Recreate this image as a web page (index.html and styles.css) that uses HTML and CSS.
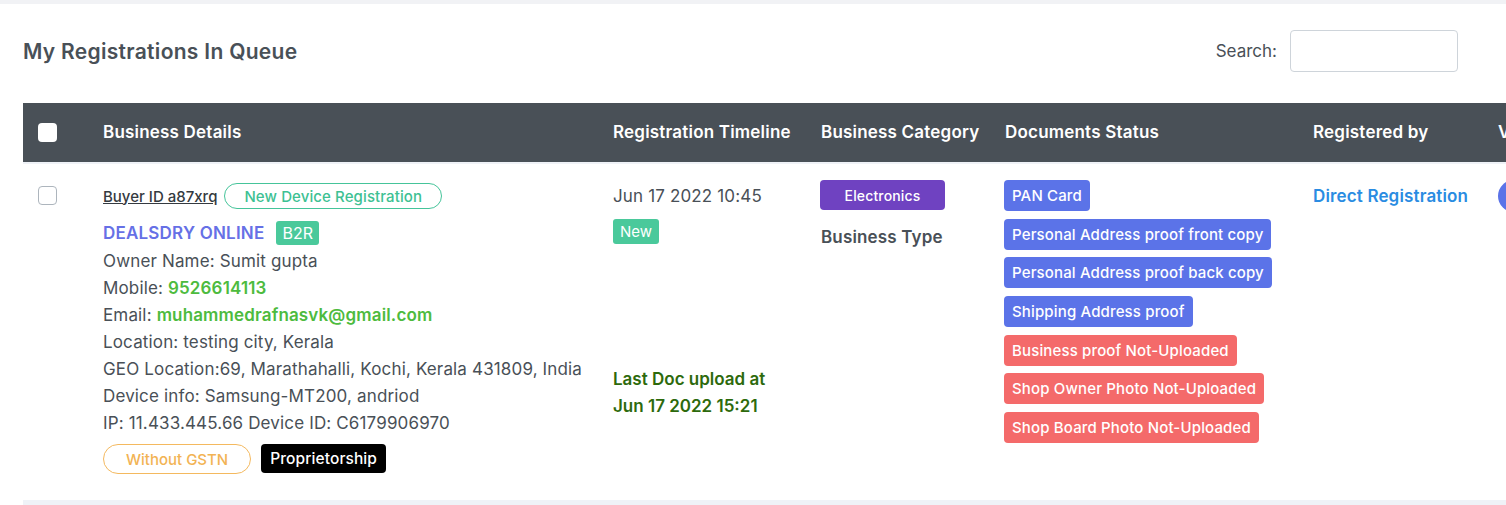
FILE: index.html
```html
<!DOCTYPE html>
<html lang="en">
<head>
<meta charset="utf-8">
<title>My Registrations In Queue</title>
<link rel="stylesheet" href="styles.css">
</head>
<body>
<div class="card">
  <div class="card-head">
    <h4 class="title">My Registrations In Queue</h4>
    <label class="search">Search: <input type="text" class="search-input"></label>
  </div>
  <div class="table-wrap">
    <table class="reg-table">
      <colgroup>
        <col class="c-check"><col class="c-details"><col class="c-time"><col class="c-cat"><col class="c-docs"><col class="c-reg"><col class="c-view">
      </colgroup>
      <thead>
        <tr>
          <th><span class="check check-head"></span></th>
          <th>Business Details</th>
          <th>Registration Timeline</th>
          <th>Business Category</th>
          <th>Documents Status</th>
          <th>Registered by</th>
          <th>View</th>
        </tr>
      </thead>
      <tbody>
        <tr>
          <td><span class="check check-row"></span></td>
          <td>
            <div class="id-line">
              <a class="buyer-id">Buyer ID a87xrq</a>
              <span class="pill pill-green">New Device Registration</span>
            </div>
            <div class="name-line">
              <span class="biz-name">DEALSDRY ONLINE</span>
              <span class="tag tag-green">B2R</span>
            </div>
            <div class="info">Owner Name: Sumit gupta</div>
            <div class="info">Mobile: <strong class="hl">9526614113</strong></div>
            <div class="info">Email: <strong class="hl">muhammedrafnasvk@gmail.com</strong></div>
            <div class="info">Location: testing city, Kerala</div>
            <div class="info">GEO Location:69, Marathahalli, Kochi, Kerala 431809, India</div>
            <div class="info">Device info: Samsung-MT200, andriod</div>
            <div class="info">IP: 11.433.445.66 Device ID: C6179906970</div>
            <div class="badge-line">
              <span class="pill pill-orange">Without GSTN</span>
              <span class="tag tag-black">Proprietorship</span>
            </div>
          </td>
          <td>
            <div class="date">Jun 17 2022 10:45</div>
            <span class="tag tag-green tag-new">New</span>
            <div class="last-doc">Last Doc upload at<br>Jun 17 2022 15:21</div>
          </td>
          <td>
            <span class="cat-badge">Electronics</span>
            <div class="biz-type">Business Type</div>
          </td>
          <td>
            <div class="docs">
              <span class="doc doc-ok">PAN Card</span>
              <span class="doc doc-ok">Personal Address proof front copy</span>
              <span class="doc doc-ok">Personal Address proof back copy</span>
              <span class="doc doc-ok">Shipping Address proof</span>
              <span class="doc doc-bad">Business proof Not-Uploaded</span>
              <span class="doc doc-bad">Shop Owner Photo Not-Uploaded</span>
              <span class="doc doc-bad">Shop Board Photo Not-Uploaded</span>
            </div>
          </td>
          <td><a class="reg-by">Direct Registration</a></td>
          <td><span class="view-btn"></span></td>
        </tr>
      </tbody>
    </table>
  </div>
</div>
</body>
</html>
```
FILE: styles.css
```css
* { box-sizing: border-box; }
html, body { margin: 0; padding: 0; }
body {
  background: #f1f2f5;
  font-family: Inter, "Noto Sans", sans-serif;
  color: #495057;
  overflow: hidden;
  padding-top: 4px;
}
.card {
  background: #fff;
  padding: 26px 0 0 23px;
  min-height: 600px;
}
.card-head {
  display: flex;
  align-items: center;
  justify-content: space-between;
  height: 41px;
  padding-right: 48px;
  margin-bottom: 32px;
}
.title {
  margin: 0;
  font-size: 21px;
  font-weight: 600;
  letter-spacing: 0.3px;
  color: #495057;
  line-height: 28px;
  padding-top: 2px;
}
.search {
  display: flex;
  align-items: center;
  gap: 13px;
  font-size: 17px;
  color: #495057;
}
.search-input {
  width: 168px;
  height: 42px;
  border: 1px solid #ced4da;
  border-radius: 4px;
  background: #fff;
}
.table-wrap { overflow: hidden; }
.reg-table {
  border-collapse: collapse;
  table-layout: fixed;
  width: 1610px;
}
.c-check { width: 65px; }
.c-details { width: 510px; }
.c-time { width: 208px; }
.c-cat { width: 184px; }
.c-docs { width: 308px; }
.c-reg { width: 185px; }
.c-view { width: 150px; }
.reg-table th {
  background: #495057;
  color: #fff;
  font-size: 17px;
  font-weight: 600;
  letter-spacing: 0.2px;
  text-align: left;
  padding: 0 15px 1px;
  height: 60px;
  vertical-align: middle;
  border-bottom: 2px solid #eff2f7;
  white-space: nowrap;
}
.reg-table td {
  vertical-align: top;
  padding: 16px 15px 26px;
  font-size: 17px;
  letter-spacing: 0.15px;
  border-bottom: 5px solid #eff2f7;
}
.check {
  display: block;
  width: 19px;
  height: 19px;
  border-radius: 4px;
}
.check-head { background: #fff; }
.check-row { border: 1px solid #adb5bd; margin-top: 6px; }
.id-line {
  display: flex;
  align-items: center;
  gap: 7px;
  height: 28px;
  margin-top: 2px;
}
.buyer-id {
  font-size: 15px;
  font-weight: 500;
  letter-spacing: 0;
  color: #343a40;
  text-decoration: underline;
}
.pill {
  display: inline-flex;
  align-items: center;
  border-radius: 15px;
  font-weight: 500;
}
.pill-green {
  height: 26px;
  padding: 0 19px;
  border: 1px solid #45c49a;
  color: #3dc193;
  font-size: 15px;
  letter-spacing: 0.1px;
}
.name-line {
  display: flex;
  align-items: center;
  gap: 12px;
  margin-top: 11px;
  height: 24px;
}
.biz-name {
  color: #6670e6;
  font-weight: 600;
  font-size: 17px;
  letter-spacing: 0.2px;
}
.tag {
  display: inline-flex;
  align-items: center;
  border-radius: 3px;
  color: #fff;
}
.tag-green {
  background: #4ac99b;
  height: 24px;
  padding: 0 6px;
  font-size: 16px;
  letter-spacing: 0;
}
.info {
  line-height: 27px;
  color: #495057;
}
.name-line + .info { margin-top: 3px; }
.hl { color: #4dbb3e; font-weight: 600; }
.badge-line {
  display: flex;
  gap: 10px;
  margin-top: 7px;
}
.pill-orange {
  height: 30px;
  padding: 0 22px;
  border: 1px solid #f4b95f;
  color: #f2b354;
  font-size: 15px;
  letter-spacing: 0;
}
.tag-black {
  background: #000;
  height: 29px;
  padding: 0 9px;
  font-size: 15.5px;
  font-weight: 500;
  letter-spacing: 0.1px;
  border-radius: 4px;
}
.date {
  line-height: 28px;
  padding-top: 2px;
  color: #495057;
}
.tag-new {
  height: 25px;
  margin-top: 9px;
  padding: 0 7px;
  font-size: 15px;
}
.last-doc {
  margin-top: 122px;
  line-height: 27px;
  color: #2d6a0c;
  font-weight: 600;
  font-size: 17px;
  letter-spacing: 0;
}
.cat-badge {
  display: flex;
  align-items: center;
  justify-content: center;
  width: 125px;
  height: 30px;
  margin-left: -1px;
  background: #6f42c1;
  color: #fff;
  border-radius: 4px;
  font-size: 14px;
  font-weight: 500;
}
.biz-type {
  margin-top: 14px;
  font-weight: 600;
  line-height: 27px;
}
.docs {
  display: flex;
  flex-direction: column;
  align-items: flex-start;
  gap: 7.7px;
  margin-left: -1px;
}
.doc {
  display: inline-flex;
  align-items: center;
  height: 31px;
  padding: 0 8px;
  border-radius: 4px;
  color: #fff;
  font-size: 15px;
  font-weight: 500;
  letter-spacing: 0.15px;
}
.doc-ok { background: #5b73e8; }
.doc-bad { background: #f46a6a; }
.reg-by {
  display: block;
  line-height: 28px;
  padding-top: 2px;
  color: #2a8ce2;
  font-weight: 600;
  white-space: nowrap;
}
.view-btn {
  display: block;
  width: 32px;
  height: 32px;
  border-radius: 50%;
  background: #5b73e8;
}
```
